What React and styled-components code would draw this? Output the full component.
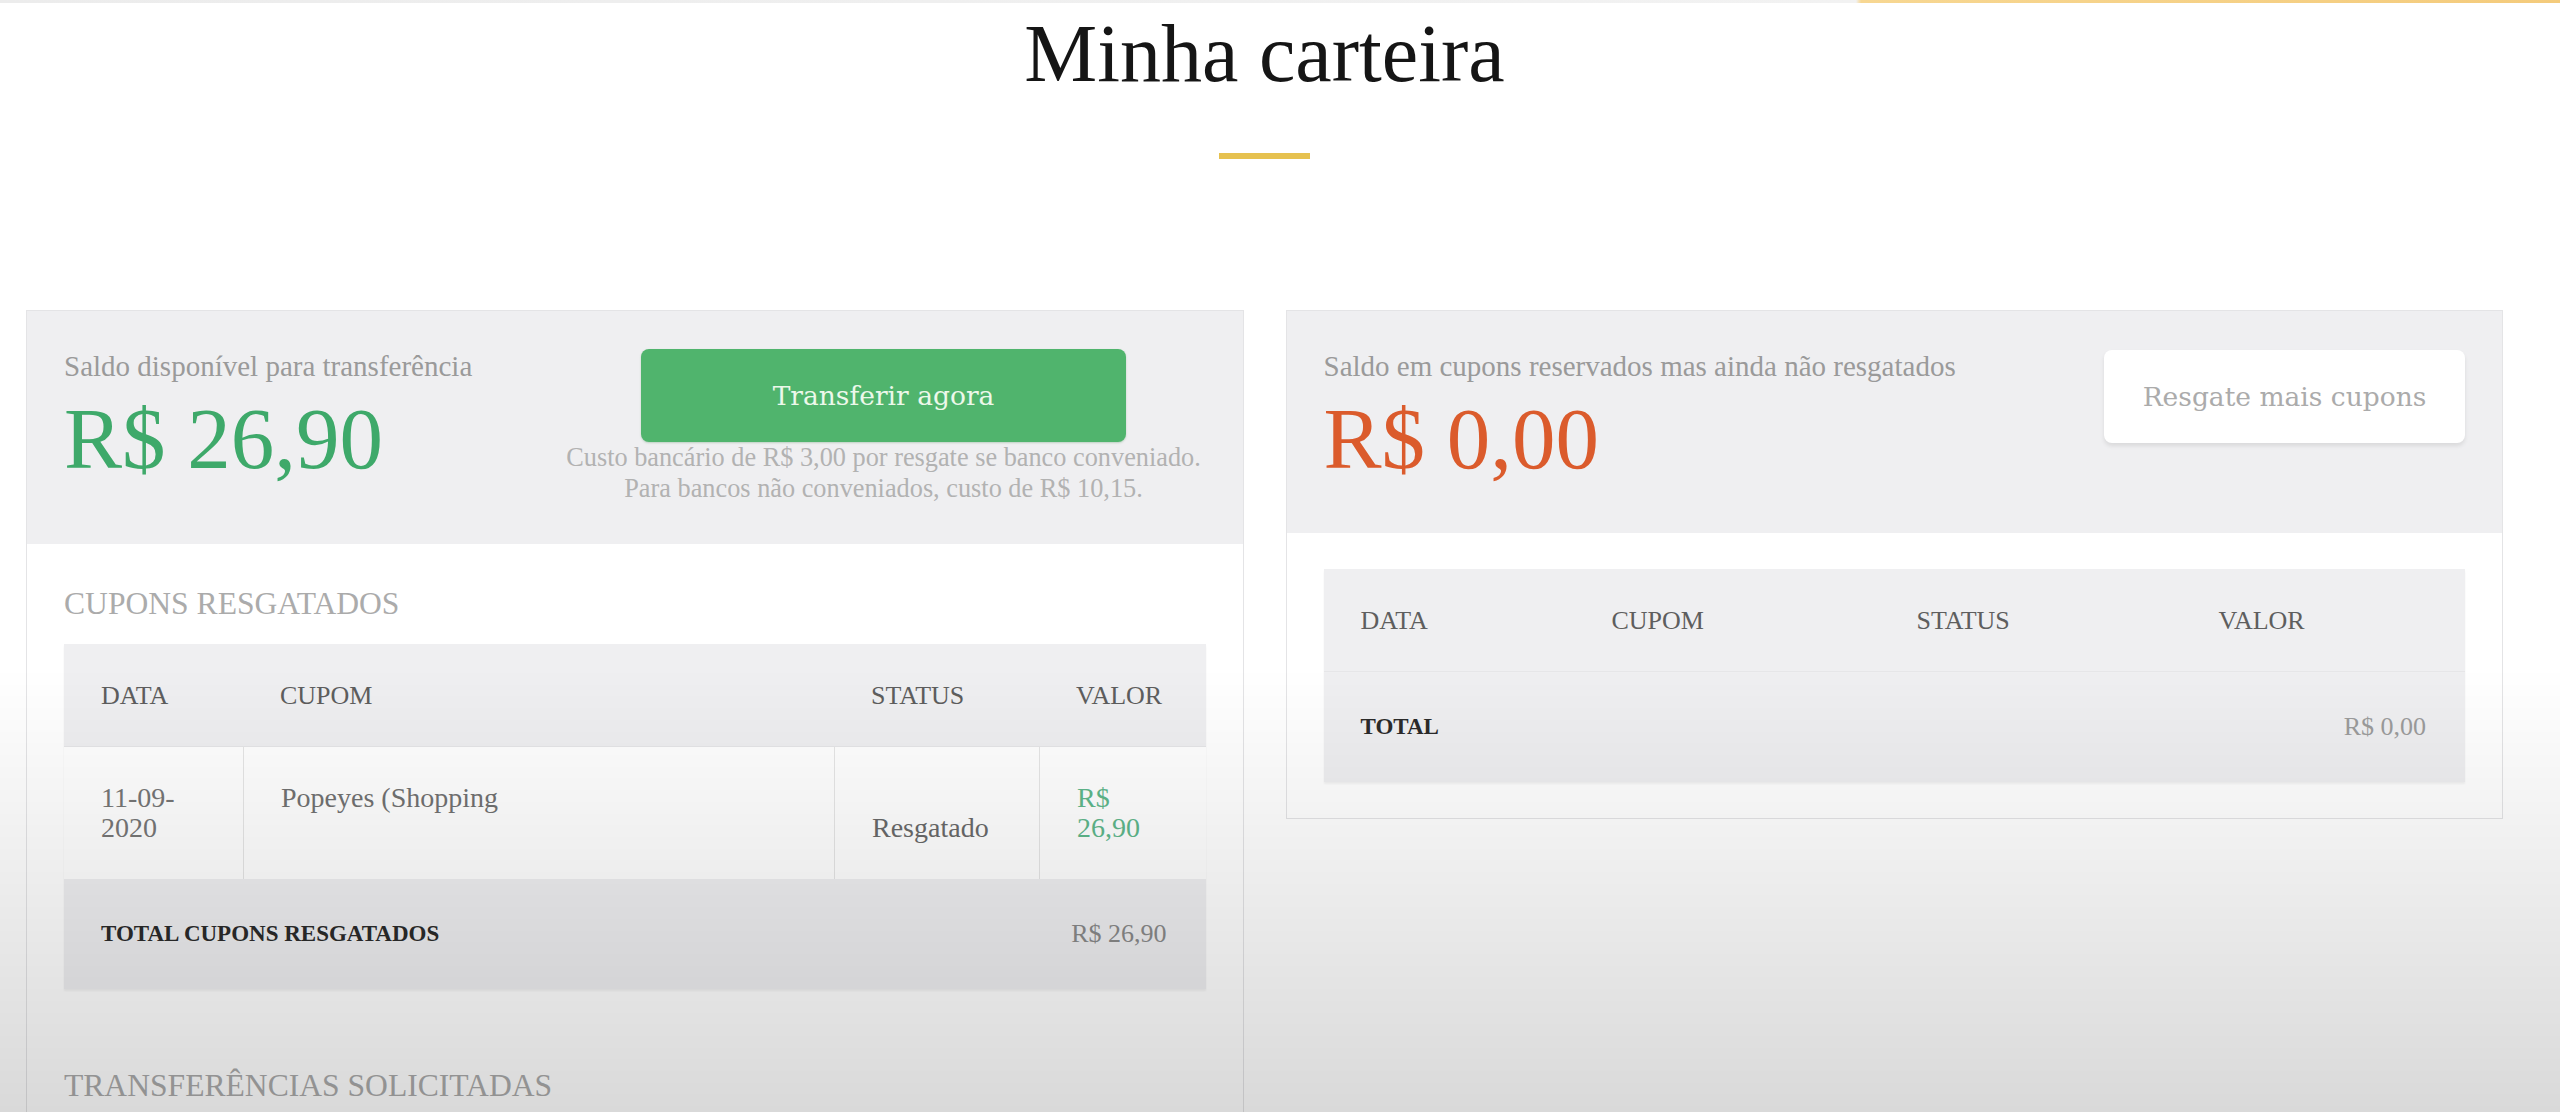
import React from 'react';
import styled, { createGlobalStyle } from 'styled-components';

const GlobalStyle = createGlobalStyle`
  html, body { margin: 0; padding: 0; background: #fff; }
  body { font-family: "Liberation Serif", "Times New Roman", serif; }
  * { box-sizing: border-box; }
`;

const Page = styled.div`
  height: 100vh;
  overflow: hidden;
  background: #fff;
`;

const TopStrip = styled.div`
  height: 3px;
  background: linear-gradient(to right, #ececec 0%, #f2f2f2 72.5%, #f7d792 72.7%, #f4cb7c 100%);
`;

const Container = styled.div`
  padding: 0 57px 0 26px;
`;

const Title = styled.h1`
  margin: 2px 0 0;
  font-size: 82px;
  font-weight: 400;
  line-height: 98px;
  text-align: center;
  color: #151515;
`;

const Underline = styled.div`
  width: 91px;
  height: 6px;
  background: #e6c14f;
  margin: 50px auto 151px;
`;

const Columns = styled.div`
  display: grid;
  grid-template-columns: 1fr 1fr;
  gap: 42px;
  align-items: start;
`;

const Card = styled.section`
  background: #fff;
  border: 1px solid #e4e4e6;
`;

const CardHeader = styled.div`
  display: grid;
  grid-template-columns: ${(p) => p.$cols};
  background: #efeff1;
  padding: 35px 37px 40px;
`;

const Summary = styled.div`
  display: flex;
  flex-direction: column;
`;

const Label = styled.p`
  margin: 0;
  font-size: 29px;
  line-height: 41px;
  color: #9a9a9a;
  white-space: nowrap;
`;

const Amount = styled.div`
  margin: 5px 0 8px;
  font-size: 87px;
  line-height: 93px;
  color: ${(p) => p.$tone};
  white-space: nowrap;
`;

const Action = styled.div`
  display: flex;
  flex-direction: column;
  align-items: center;
  padding-top: ${(p) => p.$offset || 3}px;
`;

const Button = styled.button`
  width: ${(p) => p.$w}px;
  height: 93px;
  border: none;
  border-radius: 8px;
  font-family: "DejaVu Serif", "Liberation Serif", serif;
  font-size: 26.5px;
  cursor: pointer;
  background: ${(p) => (p.$primary ? '#50b46d' : '#ffffff')};
  color: ${(p) => (p.$primary ? '#ecf8ea' : '#ababab')};
  box-shadow: ${(p) =>
    p.$primary ? '0 1px 2px rgba(40, 120, 60, 0.25)' : '0 3px 4px rgba(0, 0, 0, 0.09)'};
`;

const Note = styled.p`
  margin: 0;
  font-size: 26.3px;
  line-height: 31px;
  color: #b2b2b2;
  text-align: center;
  white-space: nowrap;
`;

const NoteLine = styled.span`
  display: block;
`;

const CardBody = styled.div`
  padding: ${(p) => p.$pad};
`;

const SectionTitle = styled.h4`
  margin: 0 0 23px;
  font-size: 31.6px;
  font-weight: 400;
  line-height: 35px;
  color: #ababab;
  white-space: nowrap;
`;

const Table = styled.div`
  margin-bottom: ${(p) => p.$after || 0}px;
  box-shadow: 0 2px 2px rgba(0, 0, 0, 0.05);
`;

const HeadRow = styled.div`
  display: grid;
  grid-template-columns: ${(p) => p.$cols};
  background: #efeff1;
  border-bottom: 1px solid #e6e6e8;
`;

const HeadCell = styled.div`
  padding: 37px 37px 35px;
  font-size: 26px;
  line-height: 30px;
  color: #5e5e5e;
  white-space: nowrap;
`;

const BodyRow = styled.div`
  display: grid;
  grid-template-columns: ${(p) => p.$cols};
  background: #fff;
`;

const BodyCell = styled.div`
  display: flex;
  flex-direction: column;
  justify-content: ${(p) => (p.$bottom ? 'flex-end' : 'flex-start')};
  padding: 36px 37px;
  font-size: 28px;
  line-height: 30px;
  color: ${(p) => p.$tone || '#777'};
  white-space: nowrap;
  & + & {
    border-left: 1px solid #e6e6e6;
  }
`;

const CellLine = styled.span`
  display: block;
`;

const TotalRow = styled.div`
  display: grid;
  grid-template-columns: 1fr auto;
  align-items: center;
  background: #efeff1;
  padding: 40px 39px 40px 37px;
`;

const TotalLabel = styled.div`
  font-size: 23px;
  line-height: 30px;
  font-weight: 700;
  color: #2b2b2b;
`;

const TotalValue = styled.div`
  font-size: 26px;
  line-height: 30px;
  color: ${(p) => p.$tone};
`;

const Shade = styled.div`
  position: fixed;
  inset: 0;
  pointer-events: none;
  background: linear-gradient(to bottom, rgba(0, 0, 0, 0) 60%, rgba(0, 0, 0, 0.15) 100%);
`;

const LEFT_COLS = '179px 591px 205px 1fr';
const RIGHT_COLS = '251px 305px 302px 1fr';

export default function App() {
  return (
    <Page>
      <GlobalStyle />
      <TopStrip />
      <Container>
        <Title>Minha carteira</Title>
        <Underline />
        <Columns>
          <Card>
            <CardHeader $cols="1fr 644px">
              <Summary>
                <Label>Saldo disponível para transferência</Label>
                <Amount $tone="#3ea96a">R$ 26,90</Amount>
              </Summary>
              <Action>
                <Button $primary $w={485}>Transferir agora</Button>
                <Note>
                  <NoteLine>Custo bancário de R$ 3,00 por resgate se banco conveniado.</NoteLine>
                  <NoteLine>Para bancos não conveniados, custo de R$ 10,15.</NoteLine>
                </Note>
              </Action>
            </CardHeader>
            <CardBody $pad="42px 37px 60px">
              <SectionTitle>CUPONS RESGATADOS</SectionTitle>
              <Table $after={79}>
                <HeadRow $cols={LEFT_COLS}>
                  <HeadCell>DATA</HeadCell>
                  <HeadCell>CUPOM</HeadCell>
                  <HeadCell>STATUS</HeadCell>
                  <HeadCell>VALOR</HeadCell>
                </HeadRow>
                <BodyRow $cols={LEFT_COLS}>
                  <BodyCell>
                    <CellLine>11-09-</CellLine>
                    <CellLine>2020</CellLine>
                  </BodyCell>
                  <BodyCell $tone="#727272">
                    <CellLine>Popeyes (Shopping</CellLine>
                  </BodyCell>
                  <BodyCell $bottom $tone="#6a6a6a">
                    <CellLine>Resgatado</CellLine>
                  </BodyCell>
                  <BodyCell $tone="#5fb88c">
                    <CellLine>R$</CellLine>
                    <CellLine>26,90</CellLine>
                  </BodyCell>
                </BodyRow>
                <TotalRow>
                  <TotalLabel>TOTAL CUPONS RESGATADOS</TotalLabel>
                  <TotalValue $tone="#8a8a8a">R$ 26,90</TotalValue>
                </TotalRow>
              </Table>
              <SectionTitle>TRANSFERÊNCIAS SOLICITADAS</SectionTitle>
            </CardBody>
          </Card>

          <Card>
            <CardHeader $cols="1fr auto">
              <Summary>
                <Label>Saldo em cupons reservados mas ainda não resgatados</Label>
                <Amount $tone="#db5b2c">R$ 0,00</Amount>
              </Summary>
              <Action $offset={4}>
                <Button $w={361}>Resgate mais cupons</Button>
              </Action>
            </CardHeader>
            <CardBody $pad="36px 37px">
              <Table>
                <HeadRow $cols={RIGHT_COLS}>
                  <HeadCell>DATA</HeadCell>
                  <HeadCell>CUPOM</HeadCell>
                  <HeadCell>STATUS</HeadCell>
                  <HeadCell>VALOR</HeadCell>
                </HeadRow>
                <TotalRow>
                  <TotalLabel>TOTAL</TotalLabel>
                  <TotalValue $tone="#9c9c9c">R$ 0,00</TotalValue>
                </TotalRow>
              </Table>
            </CardBody>
          </Card>
        </Columns>
      </Container>
      <Shade />
    </Page>
  );
}
